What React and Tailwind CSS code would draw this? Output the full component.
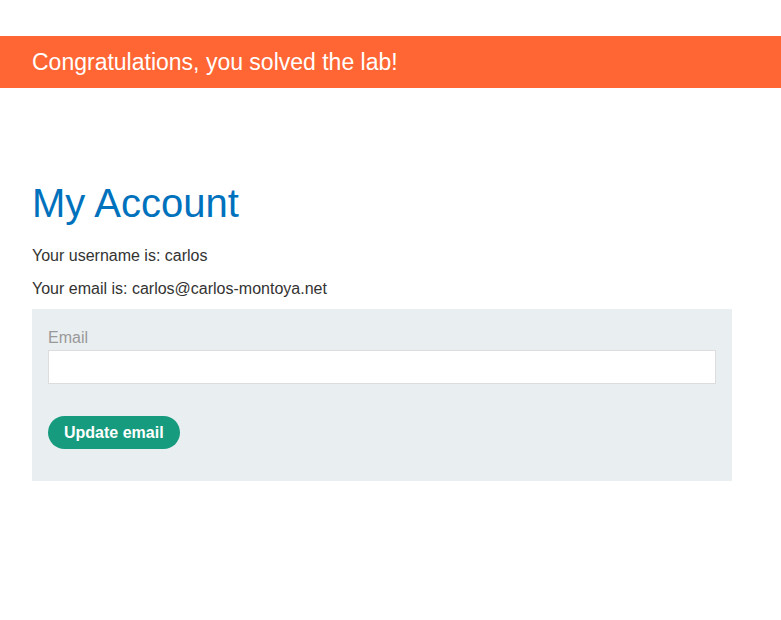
export default function App() {
  return (
    <div className="min-h-[620px] bg-white font-['Liberation_Sans',Arial,sans-serif] text-[#333332]">
      <div className="h-[36px]" />
      <div className="flex h-[52px] items-center bg-[#ff6633] px-[32px] text-[23px] leading-[26px] text-white">
        Congratulations, you solved the lab!
      </div>
      <div className="px-[32px]">
        <h1 className="mt-[92px] text-[40px] leading-[46px] text-[#0071bc]">My Account</h1>
        <p className="mt-[19px] text-[16px] leading-[22.4px]">Your username is: carlos</p>
        <p className="mt-[11px] text-[16px] leading-[22.4px]">Your email is: carlos@carlos-montoya.net</p>
        <form
          className="mt-[8px] w-[700px] bg-[#e9eef1] px-[16px] pb-[32px] pt-[18px]"
          onSubmit={(e) => e.preventDefault()}
        >
          <label className="block text-[16px] leading-[22.4px] text-[#999999]">Email</label>
          <input
            type="email"
            className="mt-[1px] block h-[34px] w-full border border-[#dddddd] bg-white px-2 text-[16px] outline-none"
          />
          <button
            type="submit"
            className="mt-[32px] flex h-[33px] items-center rounded-full bg-[#169b7e] px-[16px] text-[16px] font-bold text-white"
          >
            Update email
          </button>
        </form>
      </div>
    </div>
  );
}
